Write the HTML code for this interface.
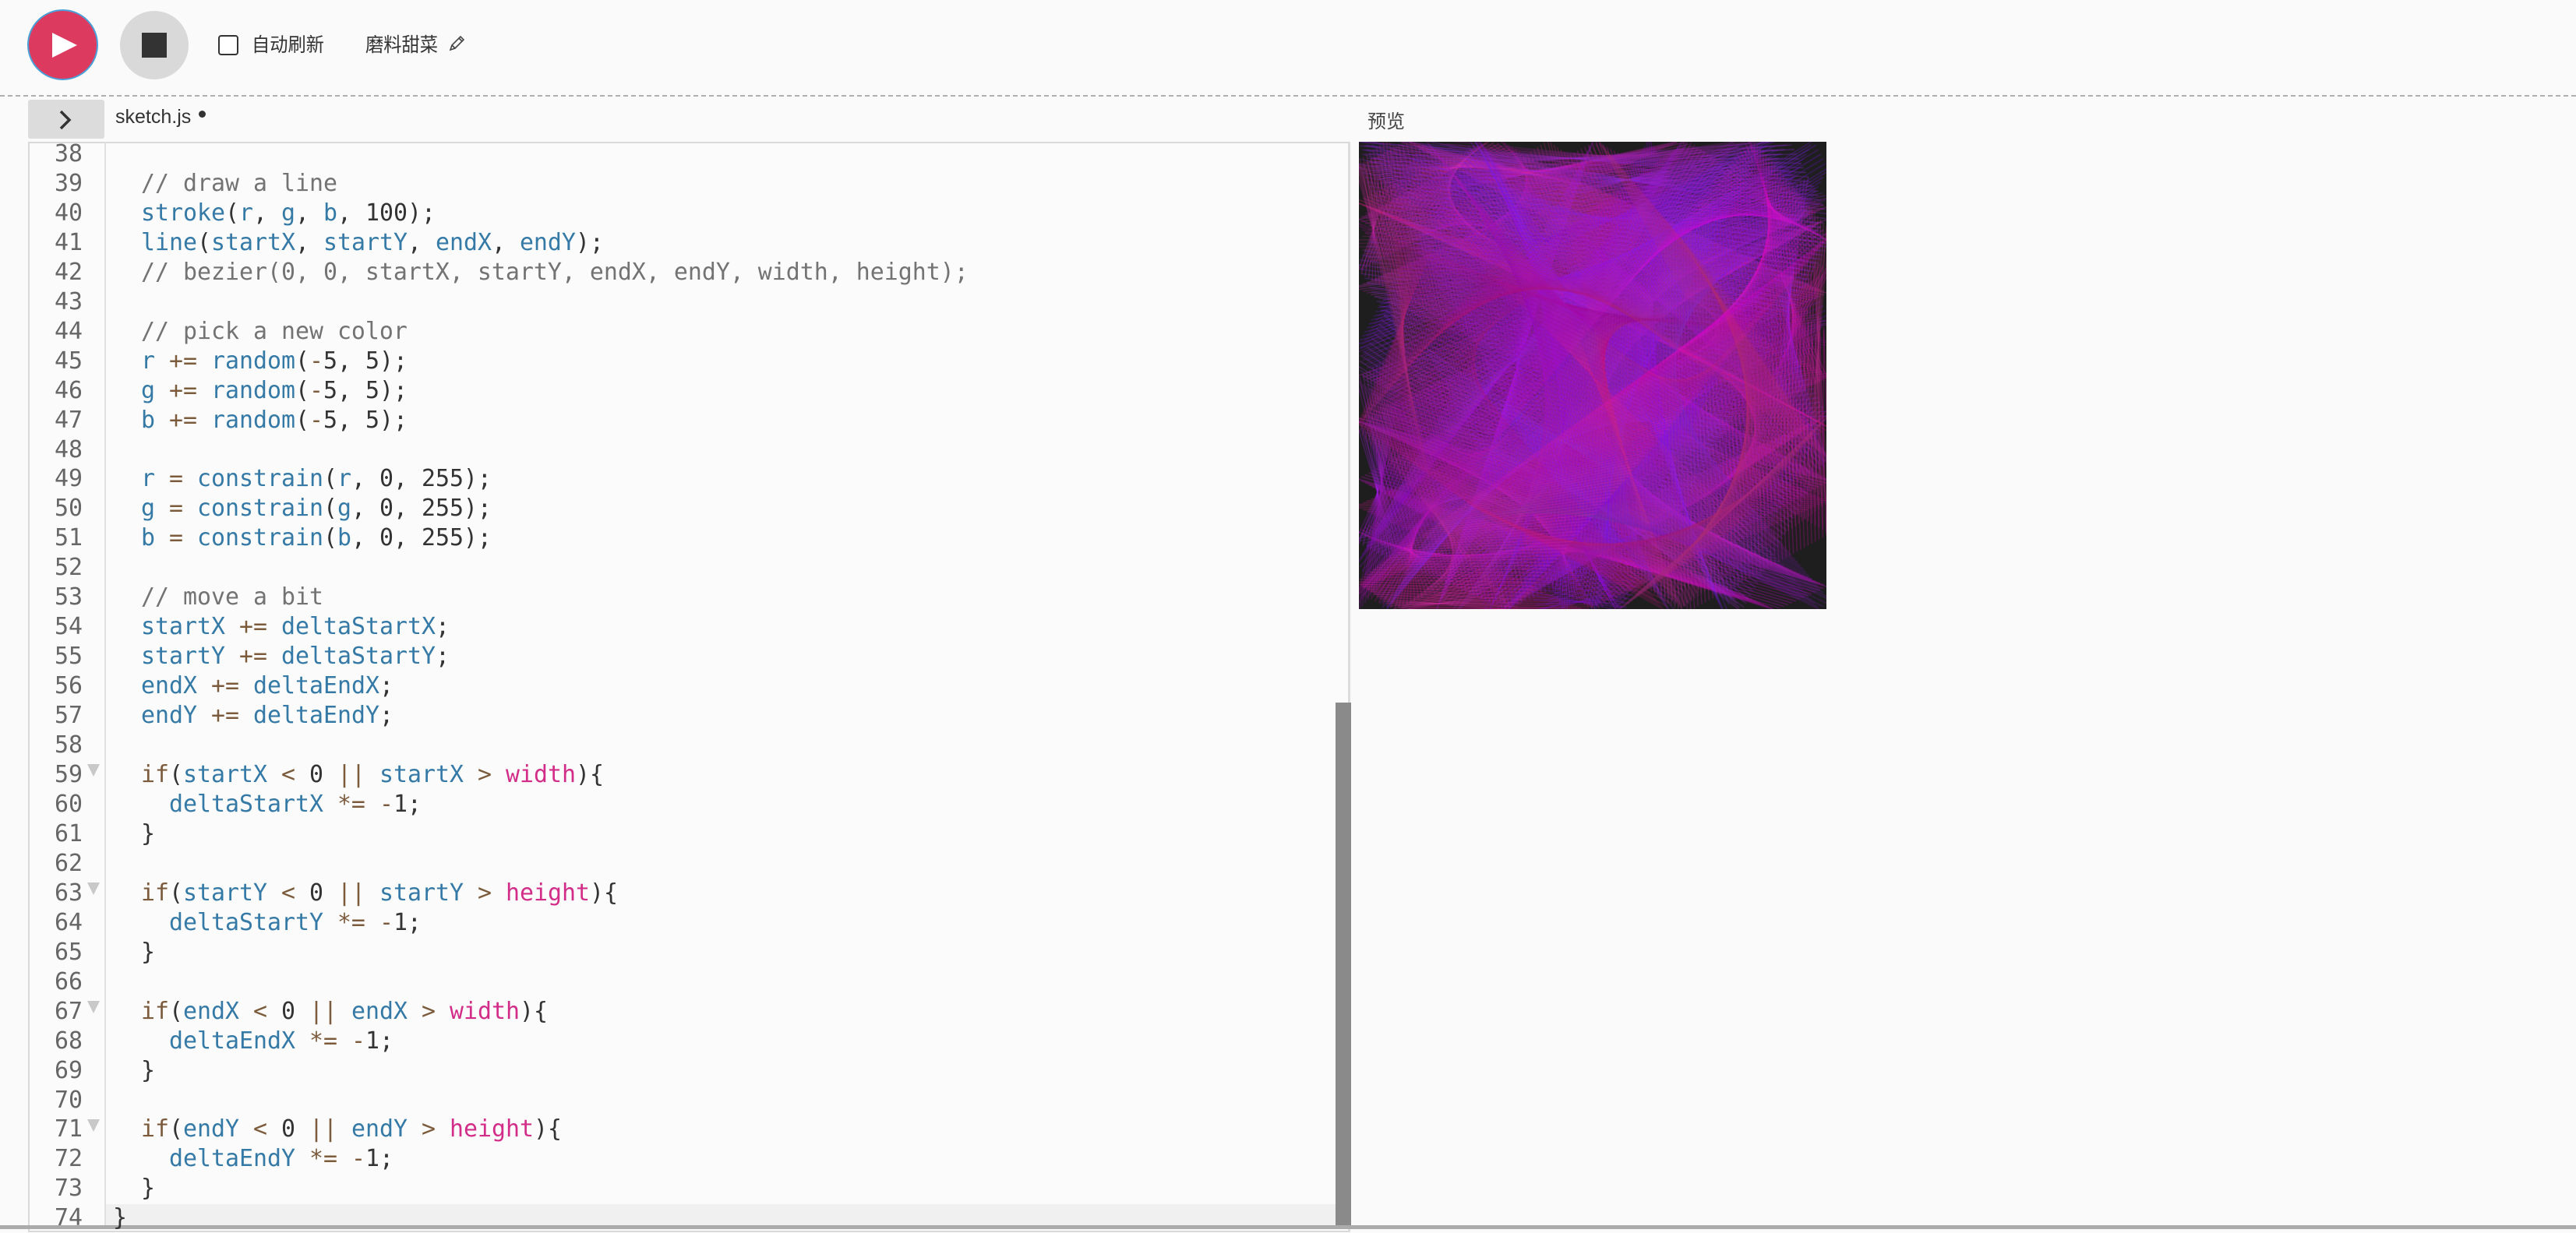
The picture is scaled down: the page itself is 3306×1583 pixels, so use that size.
<!DOCTYPE html>
<html><head><meta charset="utf-8">
<style>
html,body{margin:0;padding:0;}
body{width:3306px;height:1578px;background:#fafafa;position:relative;overflow:hidden;font-family:"Liberation Sans","Noto Sans CJK SC",sans-serif;}
.abs{position:absolute;}
.play{left:35px;top:12px;width:87px;height:87px;border-radius:50%;background:#dc3b5f;border:2px solid #4aa0d8;}
.stop{left:154px;top:14px;width:88px;height:88px;border-radius:50%;background:#d9d9d9;}
.cb{left:280px;top:45px;width:22px;height:22px;border:2px solid #333;border-radius:4px;background:#fff;}
.lbl{font-size:25px;color:#333;top:38px;white-space:nowrap;transform-origin:left center;transform:scaleX(0.93);}
.dash{left:0;top:122px;width:3306px;height:0;border-top:2px dashed #b0b0b0;}
.tabbtn{left:36px;top:128px;width:98px;height:50px;background:#dcdcdc;border-radius:3px;}
.editor{left:36px;top:182px;width:1697px;height:1400px;border:2px solid #d9d9d9;border-right:3px solid #dcdcdc;background:#fbfbfb;box-sizing:border-box;}
.gutter{left:134px;top:183px;width:2px;height:1395px;background:#e0e0e0;}
.code{left:0;top:179px;font-family:"DejaVu Sans Mono","Liberation Mono",monospace;font-size:29.9px;line-height:37.95px;white-space:pre;color:#333;}
.ln{left:36px;width:70px;text-align:right;color:#666;}
.tx{left:145px;}
.c{color:#737373}.f{color:#357aa6}.o{color:#7b5b3b}.m{color:#d22d88}
.fold{width:0;height:0;border-left:8px solid transparent;border-right:8px solid transparent;border-top:16px solid #c8c8c8;left:112px;}
</style></head><body>
<div class="abs play"></div>
<svg class="abs" style="left:66px;top:41px" width="34" height="34"><polygon points="1,1 33,17 1,33" fill="#fff"/></svg>
<div class="abs stop"></div>
<div class="abs" style="left:182px;top:42px;width:32px;height:32px;background:#333"></div>
<div class="abs cb"></div>
<div class="abs lbl" style="left:323px">自动刷新</div>
<div class="abs lbl" style="left:469px">磨料甜菜</div>
<svg class="abs" style="left:575px;top:45px" width="22" height="22" viewBox="0 0 22 22"><path d="M3 19 L5 13 L16 2 L20 6 L9 17 Z M5 13 L9 17 M14 4 L18 8" fill="none" stroke="#444" stroke-width="1.6"/></svg>
<div class="abs dash"></div>
<div class="abs tabbtn"></div>
<svg class="abs" style="left:74px;top:140px" width="20" height="28"><path d="M4 3 L15 14 L4 25" fill="none" stroke="#333" stroke-width="3.5"/></svg>
<div class="abs" style="left:148px;top:136px;font-size:25px;color:#333;font-family:'Liberation Sans',sans-serif">sketch.js</div>
<div class="abs" style="left:255px;top:142px;width:9px;height:9px;border-radius:50%;background:#333"></div>
<div class="abs" style="left:1755px;top:136px;font-size:24px;color:#444">预览</div>
<div class="abs editor"></div>
<div class="abs" style="left:136px;top:1546px;width:1578px;height:28px;background:#f0f0f0"></div>
<div class="abs gutter"></div>
<div class="abs" style="left:1714px;top:902px;width:20px;height:672px;background:#8a8a8a"></div>
<div class="abs" style="left:0;top:1573px;width:3306px;height:5px;background:#ababab"></div>
<div class="abs code ln">38
39
40
41
42
43
44
45
46
47
48
49
50
51
52
53
54
55
56
57
58
59
60
61
62
63
64
65
66
67
68
69
70
71
72
73
74</div>
<div class="abs fold" style="top:981px"></div>
<div class="abs fold" style="top:1133px"></div>
<div class="abs fold" style="top:1285px"></div>
<div class="abs fold" style="top:1437px"></div>
<div class="abs code tx">
  <span class="c">// draw a line</span>
  <span class="f">stroke</span>(<span class="f">r</span>, <span class="f">g</span>, <span class="f">b</span>, 100);
  <span class="f">line</span>(<span class="f">startX</span>, <span class="f">startY</span>, <span class="f">endX</span>, <span class="f">endY</span>);
  <span class="c">// bezier(0, 0, startX, startY, endX, endY, width, height);</span>

  <span class="c">// pick a new color</span>
  <span class="f">r</span> <span class="o">+=</span> <span class="f">random</span>(<span class="o">-</span>5, 5);
  <span class="f">g</span> <span class="o">+=</span> <span class="f">random</span>(<span class="o">-</span>5, 5);
  <span class="f">b</span> <span class="o">+=</span> <span class="f">random</span>(<span class="o">-</span>5, 5);

  <span class="f">r</span> <span class="o">=</span> <span class="f">constrain</span>(<span class="f">r</span>, 0, 255);
  <span class="f">g</span> <span class="o">=</span> <span class="f">constrain</span>(<span class="f">g</span>, 0, 255);
  <span class="f">b</span> <span class="o">=</span> <span class="f">constrain</span>(<span class="f">b</span>, 0, 255);

  <span class="c">// move a bit</span>
  <span class="f">startX</span> <span class="o">+=</span> <span class="f">deltaStartX</span>;
  <span class="f">startY</span> <span class="o">+=</span> <span class="f">deltaStartY</span>;
  <span class="f">endX</span> <span class="o">+=</span> <span class="f">deltaEndX</span>;
  <span class="f">endY</span> <span class="o">+=</span> <span class="f">deltaEndY</span>;

  <span class="o">if</span>(<span class="f">startX</span> <span class="o">&lt;</span> 0 <span class="o">||</span> <span class="f">startX</span> <span class="o">&gt;</span> <span class="m">width</span>){
    <span class="f">deltaStartX</span> <span class="o">*=</span> <span class="o">-</span>1;
  }

  <span class="o">if</span>(<span class="f">startY</span> <span class="o">&lt;</span> 0 <span class="o">||</span> <span class="f">startY</span> <span class="o">&gt;</span> <span class="m">height</span>){
    <span class="f">deltaStartY</span> <span class="o">*=</span> <span class="o">-</span>1;
  }

  <span class="o">if</span>(<span class="f">endX</span> <span class="o">&lt;</span> 0 <span class="o">||</span> <span class="f">endX</span> <span class="o">&gt;</span> <span class="m">width</span>){
    <span class="f">deltaEndX</span> <span class="o">*=</span> <span class="o">-</span>1;
  }

  <span class="o">if</span>(<span class="f">endY</span> <span class="o">&lt;</span> 0 <span class="o">||</span> <span class="f">endY</span> <span class="o">&gt;</span> <span class="m">height</span>){
    <span class="f">deltaEndY</span> <span class="o">*=</span> <span class="o">-</span>1;
  }
}</div>
<div class="abs" style="left:1744px;top:182px;width:600px;height:600px;background:radial-gradient(ellipse at 50% 50%,#9a2ad8 0%,#a52ccc 40%,#b82f98 75%,#3a1a35 100%)"></div>
<canvas id="cv" class="abs" style="left:1744px;top:182px" width="600" height="600"></canvas>
<script>
(function(){
var c=document.getElementById('cv');if(!c.getContext)return;var x=c.getContext('2d');
x.fillStyle='#1e1e1e';x.fillRect(0,0,600,600);
var s=12345;function rnd(a,b){s=(s*1103515245+12345)%2147483648;return a+(b-a)*s/2147483648;}
function run(n,r,g,b,sx,sy,ex,ey,dsx,dsy,dex,dey){
x.lineWidth=1.3;
for(var i=0;i<n;i++){
x.strokeStyle='rgba('+(r|0)+','+(g|0)+','+(b|0)+',0.33)';
x.beginPath();x.moveTo(sx,sy);x.lineTo(ex,ey);x.stroke();
r+=rnd(-5,5);g+=rnd(-5,5);b+=rnd(-5,5);
r=Math.min(240,Math.max(120,r));g=Math.min(50,Math.max(10,g));b=Math.min(255,Math.max(110,b));
sx+=dsx;sy+=dsy;ex+=dex;ey+=dey;
if(sx<0||sx>600)dsx*=-1;if(sy<0||sy>600)dsy*=-1;
if(ex<0||ex>600)dex*=-1;if(ey<0||ey>600)dey*=-1;}
}
run(1800,210,30,200,0,300,600,100,5.1,2.3,-4.7,2.6);
run(1500,180,20,240,300,0,100,600,-2.9,5.2,3.1,-5.9);
run(1500,220,40,160,100,100,500,500,4.3,-3.1,-3.7,4.4);
})();
</script>
</body></html>
